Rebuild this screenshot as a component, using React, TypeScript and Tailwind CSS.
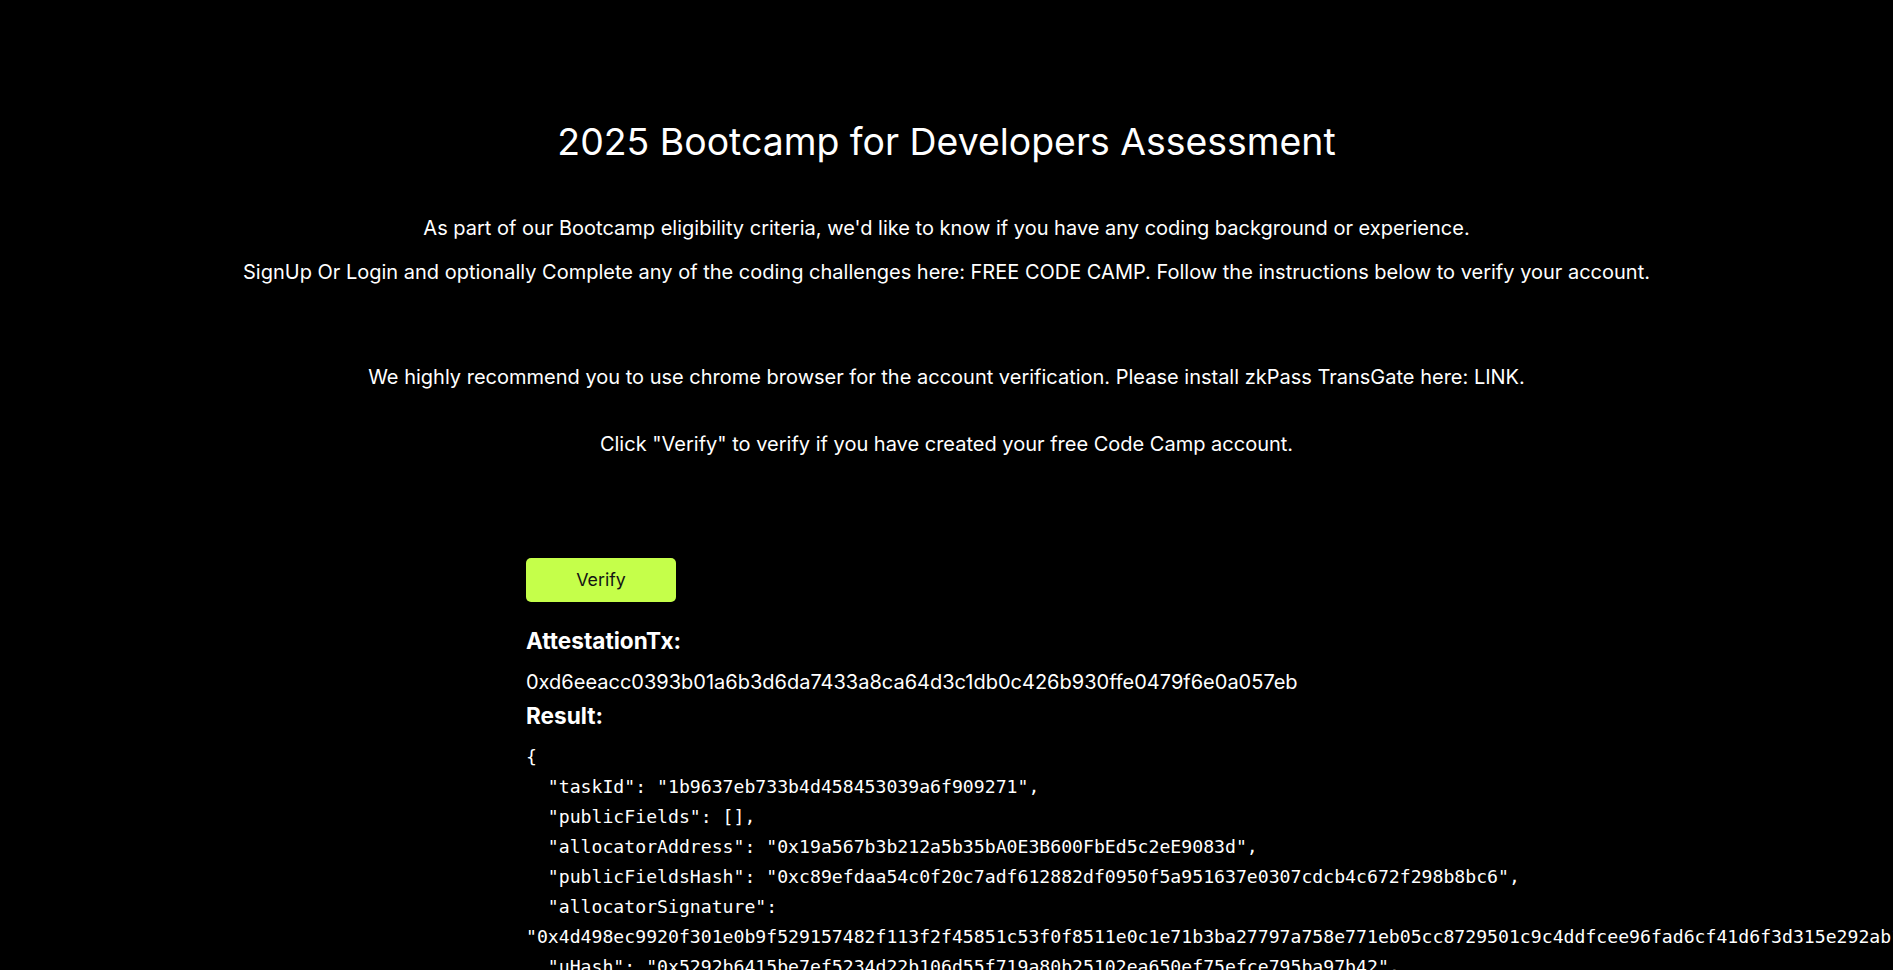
import React from "react";

const json = `{
  "taskId": "1b9637eb733b4d458453039a6f909271",
  "publicFields": [],
  "allocatorAddress": "0x19a567b3b212a5b35bA0E3B600FbEd5c2eE9083d",
  "publicFieldsHash": "0xc89efdaa54c0f20c7adf612882df0950f5a951637e0307cdcb4c672f298b8bc6",
  "allocatorSignature": "0x4d498ec9920f301e0b9f529157482f113f2f45851c53f0f8511e0c1e71b3ba27797a758e771eb05cc8729501c9c4ddfcee96fad6cf41d6f3d315e292ab1b",
  "uHash": "0x5292b6415be7ef5234d22b106d55f719a80b25102ea650ef75efce795ba97b42",
  "validatorAddress": "0xb1C4C1E1Cdd5Cf69E27A3A08C8f51145c2E12C6a",
  "validatorSignature": "0x2a2b0a9f1d8c2e5f7d0b3f42e6a1c9b8d7e6f5a4b3c2d1e0f9a8b7c6d5e4f3a2b1c0d9e8f7a6b5c4d3e2f1a0b9c8d7e6f5a4b3c2d1e0f9a8b7c6d5e4f3a21c",
  "recipient": "0x0000000000000000000000000000000000000000"
}`;

export default function App() {
  return (
    <div
      className="h-screen w-full overflow-hidden bg-black text-white"
      style={{ fontFamily: "Inter, 'Noto Sans', sans-serif" }}
    >
      <div className="flex flex-col items-center pt-[122px] text-center">
        <h1 className="text-[37.4px] font-normal leading-[40px]">
          2025 Bootcamp for Developers Assessment
        </h1>
        <p className="mt-[52px] text-[20px] leading-[28px]">
          As part of our Bootcamp eligibility criteria, we'd like to know if you have any coding background or experience.
        </p>
        <p className="mt-[16px] text-[20px] leading-[28px]">
          SignUp Or Login and optionally Complete any of the coding challenges here: FREE CODE CAMP. Follow the instructions below to verify your account.
        </p>
        <p className="mt-[77px] text-[20px] leading-[28px]">
          We highly recommend you to use chrome browser for the account verification. Please install zkPass TransGate here: LINK.
        </p>
        <p className="mt-[39px] text-[20px] leading-[28px]">
          Click "Verify" to verify if you have created your free Code Camp account.
        </p>
      </div>
      <div className="ml-[526px] mt-[100px] flex w-[1367px] flex-col items-start">
        <button className="h-[44px] w-[150px] rounded-[5px] bg-[#c5ff4a] text-[17.8px] text-[#141414]">
          Verify
        </button>
        <h2 className="mt-[25px] text-[22.6px] font-bold leading-[28px]">AttestationTx:</h2>
        <p className="mt-[13px] text-[20px] leading-[28px]">
          0xd6eeacc0393b01a6b3d6da7433a8ca64d3c1db0c426b930ffe0479f6e0a057eb
        </p>
        <h2 className="mt-[6px] text-[22.6px] font-bold leading-[28px]">Result:</h2>
        <pre
          className="mt-[12px] w-full whitespace-pre-wrap text-[18.15px] leading-[30px]"
          style={{ fontFamily: "'DejaVu Sans Mono', 'Liberation Mono', monospace" }}
        >
          {json}
        </pre>
      </div>
    </div>
  );
}
